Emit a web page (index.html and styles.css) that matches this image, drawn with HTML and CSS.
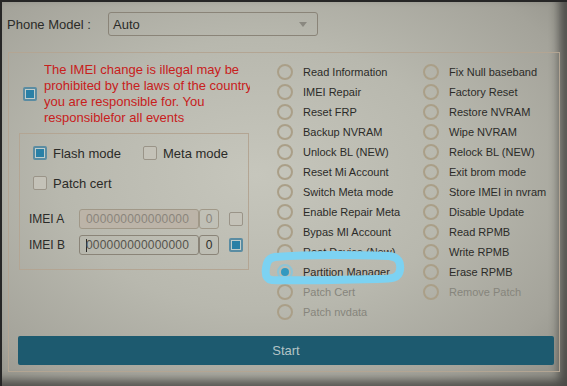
FILE: index.html
```html
<!DOCTYPE html>
<html lang="en">

<head>
    <meta charset="UTF-8">
    <title>IMEI Tool</title>
    <link rel="stylesheet" href="styles.css">
</head>

<body>
    <div class="screen">
        <div class="model-row">
            <label class="model-label">Phone Model :</label>
            <div class="model-select">
                <span>Auto</span>
                <span class="arrow"></span>
            </div>
        </div>

        <div class="group">
            <div class="main">
                <div class="left">
                    <div class="warning">
                        <span class="check checked"></span>
                        <div class="warning-text">
                            The IMEI change is illegal may be<br>
                            prohibited by the laws of the country<br>
                            you are responsible for. You<br>
                            responsiblefor all events
                        </div>
                    </div>

                    <div class="inner-box">
                        <div class="modes">
                            <div class="opt opt-flash"><span class="check checked"></span>Flash mode</div>
                            <div class="opt"><span class="check"></span>Meta mode</div>
                        </div>
                        <div class="opt opt-patch"><span class="check"></span>Patch cert</div>

                        <div class="imei-row imei-a">
                            <span class="imei-label">IMEI A</span>
                            <span class="imei-input disabled">000000000000000</span>
                            <span class="imei-digit disabled">0</span>
                            <span class="check"></span>
                        </div>
                        <div class="imei-row">
                            <span class="imei-label">IMEI B</span>
                            <span class="imei-input"><i class="caret"></i>000000000000000</span>
                            <span class="imei-digit">0</span>
                            <span class="check checked"></span>
                        </div>
                    </div>
                </div>

                <div class="radios">
                    <div class="radio-col">
                        <div class="radio"><span class="dot"></span>Read Information</div>
                        <div class="radio"><span class="dot"></span>IMEI Repair</div>
                        <div class="radio"><span class="dot"></span>Reset FRP</div>
                        <div class="radio"><span class="dot"></span>Backup NVRAM</div>
                        <div class="radio"><span class="dot"></span>Unlock BL (NEW)</div>
                        <div class="radio"><span class="dot"></span>Reset Mi Account</div>
                        <div class="radio"><span class="dot"></span>Switch Meta mode</div>
                        <div class="radio"><span class="dot"></span>Enable Repair Meta</div>
                        <div class="radio"><span class="dot"></span>Bypas MI Account</div>
                        <div class="radio"><span class="dot"></span>Root Device (New)</div>
                        <div class="radio"><span class="dot on"></span>Partition Manager</div>
                        <div class="radio off"><span class="dot"></span>Patch Cert</div>
                        <div class="radio off"><span class="dot"></span>Patch nvdata</div>
                    </div>
                    <div class="radio-col">
                        <div class="radio"><span class="dot"></span>Fix Null baseband</div>
                        <div class="radio"><span class="dot"></span>Factory Reset</div>
                        <div class="radio"><span class="dot"></span>Restore NVRAM</div>
                        <div class="radio"><span class="dot"></span>Wipe NVRAM</div>
                        <div class="radio"><span class="dot"></span>Relock BL (NEW)</div>
                        <div class="radio"><span class="dot"></span>Exit brom mode</div>
                        <div class="radio"><span class="dot"></span>Store IMEI in nvram</div>
                        <div class="radio"><span class="dot"></span>Disable Update</div>
                        <div class="radio"><span class="dot"></span>Read RPMB</div>
                        <div class="radio"><span class="dot"></span>Write RPMB</div>
                        <div class="radio"><span class="dot"></span>Erase RPMB</div>
                        <div class="radio off"><span class="dot"></span>Remove Patch</div>
                    </div>
                </div>
            </div>

            <button class="start-button">Start</button>
        </div>

        <!-- hand drawn marker around the selected option -->
        <svg class="marker" width="146" height="40" viewBox="0 0 146 40">
            <path d="M14 8 C50 5 98 6 128 7 C138 8 140 14 139 21 C138 29 132 30 116 30 C78 31 40 32 11 31 C5 30 4 26 5 19 C6 12 8 9 14 8 Z"
                fill="none" stroke="#7cd2f2" stroke-width="8" stroke-linejoin="round" />
        </svg>
    </div>
</body>

</html>
```

FILE: styles.css
```css
body {
    margin: 0;
    background-color: #262626;
    font-family: "Liberation Sans", Arial, sans-serif;
    font-size: 12px;
    color: #2b2b28;
}

.screen {
    position: relative;
    width: 565px;
    height: 384px;
    margin: 2px 0 0 2px;
    box-sizing: border-box;
    padding-top: 10px;
    background: radial-gradient(ellipse at 45% 45%, #c6c6bc 0%, #b8b8ae 45%, #a4a39a 80%, #8e8d85 100%);
    box-shadow: inset -8px -6px 10px rgba(20, 20, 20, 0.55);
}

.model-row {
    display: flex;
    align-items: center;
    height: 24px;
    margin-bottom: 16px;
}

.model-label {
    width: 101px;
    padding-left: 5px;
    font-size: 13px;
}

.model-select {
    display: flex;
    align-items: center;
    justify-content: space-between;
    width: 210px;
    height: 24px;
    box-sizing: border-box;
    padding: 0 10px 0 4px;
    border: 1px solid #8a8478;
    border-radius: 3px;
    font-size: 13px;
}

.arrow {
    width: 0;
    height: 0;
    border-left: 4px solid transparent;
    border-right: 4px solid transparent;
    border-top: 5px solid #8a8880;
}

.group {
    width: 552px;
    height: 320px;
    margin-left: 6px;
    box-sizing: border-box;
    border: 1px solid #b3a593;
    padding: 9px 6px 8px 9px;
}

.main {
    display: flex;
    height: 271px;
}

.left {
    width: 250px;
}

.warning {
    display: flex;
    align-items: center;
    padding-left: 5px;
}

.warning .check {
    margin-right: 7px;
}

/* the original window cuts the long line off at its edge */
.warning-text {
    width: 206px;
    overflow: hidden;
    white-space: nowrap;
    line-height: 16px;
    font-size: 13px;
    color: #c8201c;
}

.check {
    display: inline-block;
    flex: none;
    width: 14px;
    height: 14px;
    box-sizing: border-box;
    border: 1px solid #9a9488;
    border-radius: 2px;
    background-color: #c4c2b8;
}

.check.checked {
    border: 2px solid #5a8ca2;
    background-color: #2a80a6;
    box-shadow: inset 0 0 0 1px #c0ccca;
}

.inner-box {
    width: 230px;
    height: 137px;
    margin: 7px 0 0 1px;
    box-sizing: border-box;
    border: 1px solid #b3a593;
    padding: 12px 0 0 13px;
}

.modes {
    display: flex;
}

.opt {
    display: flex;
    align-items: center;
    gap: 6px;
    height: 14px;
    font-size: 13px;
}

.opt-flash {
    width: 110px;
}

.opt-patch {
    margin-top: 16px;
}

.imei-row {
    display: flex;
    align-items: center;
    height: 20px;
    margin-left: -4px;
}

.imei-a {
    margin-top: 19px;
    margin-bottom: 6px;
}

.imei-label {
    width: 50px;
}

.imei-input {
    display: flex;
    align-items: center;
    width: 120px;
    height: 20px;
    box-sizing: border-box;
    padding-left: 6px;
    border: 1px solid #8a8478;
    border-radius: 3px;
    color: #55534c;
    letter-spacing: 0.2px;
}

.imei-input.disabled {
    border-color: #a09888;
    background-color: #bcb4a8;
    color: #8a857c;
}

.caret {
    width: 1px;
    height: 13px;
    margin-right: -1px;
    background-color: #2b2b28;
}

.imei-digit {
    display: flex;
    align-items: center;
    justify-content: center;
    width: 20px;
    height: 20px;
    box-sizing: border-box;
    border: 1px solid #8a8478;
    border-radius: 3px;
    margin-right: 10px;
}

.imei-digit.disabled {
    border-color: #a09888;
    color: #8a857c;
}

.radios {
    display: flex;
    padding-left: 27px;
}

.radio-col {
    width: 146px;
}

.radio {
    display: flex;
    align-items: center;
    gap: 10px;
    height: 20px;
    white-space: nowrap;
    font-size: 11px;
}

.radio.off {
    color: #86857c;
}

.dot {
    position: relative;
    flex: none;
    width: 16px;
    height: 16px;
    box-sizing: border-box;
    border: 2px solid #aa9f88;
    border-radius: 50%;
}

.dot.on {
    border-color: #8ec4d6;
}

.dot.on::after {
    content: "";
    position: absolute;
    left: 2px;
    top: 2px;
    width: 8px;
    height: 8px;
    border-radius: 50%;
    background-color: #3299c0;
}

.start-button {
    display: block;
    width: 536px;
    height: 29px;
    margin-top: 3px;
    border: none;
    border-radius: 2px;
    background-color: #1d5a6f;
    color: #b4c4c6;
    font-family: "Liberation Sans", Arial, sans-serif;
    font-size: 13px;
}

.marker {
    position: absolute;
    left: 259px;
    top: 247px;
}
```
